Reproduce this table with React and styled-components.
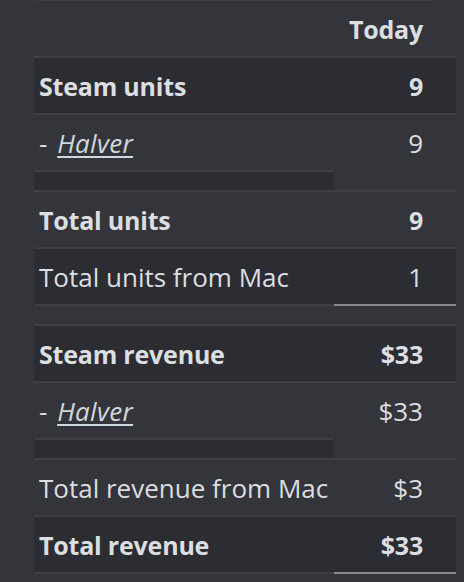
import React from 'react';
import styled, { createGlobalStyle } from 'styled-components';

const GlobalStyle = createGlobalStyle`
  html, body {
    margin: 0;
    padding: 0;
    background: #34353a;
  }
  body {
    font-family: "Open Sans", "Noto Sans", sans-serif;
    color: #dcdee0;
  }
`;

const Page = styled.div`
  padding-left: 34px;
  width: 422px;
`;

const TopRule = styled.div`
  width: 398px;
  height: 1px;
  background: #3e3f44;
`;

const Table = styled.table`
  width: 422px;
  border-collapse: separate;
  border-spacing: 0;
  table-layout: fixed;
  font-size: 26px;

  tbody tr:nth-child(odd) td {
    background: #2c2d32;
  }
`;

const HeadCell = styled.th`
  height: 55px;
  padding: 0 33px 0 5px;
  text-align: right;
  font-size: 25px;
  font-weight: 700;
  letter-spacing: -0.2px;
  vertical-align: middle;
  line-height: 30px;
`;

const Cell = styled.td`
  height: ${p => (p.$spacer ? '18px' : '55px')};
  padding: 0 ${p => (p.$num ? '33px' : '5px')} 0 5px;
  border-top: 2px solid ${p => (p.$total ? '#8a8a8a' : '#3e3f44')};
  text-align: ${p => (p.$num ? 'right' : 'left')};
  font-size: ${p => (p.$bold ? '25px' : '26px')};
  font-weight: ${p => (p.$bold ? 700 : 400)};
  letter-spacing: ${p => (p.$bold ? '-0.2px' : '0')};
  vertical-align: middle;
  line-height: 30px;
  white-space: nowrap;
`;

const GameLink = styled.a`
  margin-left: 3px;
  font-style: italic;
  color: #cfd8de;
  text-decoration: underline;
  text-underline-offset: 3px;
  letter-spacing: 0.3px;
`;

const Row = ({ label, value, bold, link, totalLine }) => (
  <tr>
    <Cell $bold={bold}>
      {link ? (
        <>
          - <GameLink href="#">{label}</GameLink>
        </>
      ) : (
        label
      )}
    </Cell>
    <Cell $num $bold={bold} $total={totalLine}>
      {value}
    </Cell>
  </tr>
);

const Spacer = ({ full, totalLine }) => (
  <tr>
    <Cell $spacer />
    {full && <Cell $spacer $num $total={totalLine} />}
  </tr>
);

export default function App() {
  return (
    <Page>
      <GlobalStyle />
      <TopRule />
      <Table>
        <colgroup>
          <col style={{ width: 300 }} />
          <col style={{ width: 122 }} />
        </colgroup>
        <thead>
          <tr>
            <HeadCell />
            <HeadCell>Today</HeadCell>
          </tr>
        </thead>
        <tbody>
          <Row label="Steam units" value="9" bold />
          <Row label="Halver" value="9" link />
          <Spacer />
          <Row label="Total units" value="9" bold />
          <Row label="Total units from Mac" value="1" />
          <Spacer full totalLine />
          <Row label="Steam revenue" value="$33" bold />
          <Row label="Halver" value="$33" link />
          <Spacer />
          <Row label="Total revenue from Mac" value="$3" />
          <Row label="Total revenue" value="$33" bold />
          <Spacer full totalLine />
        </tbody>
      </Table>
    </Page>
  );
}
